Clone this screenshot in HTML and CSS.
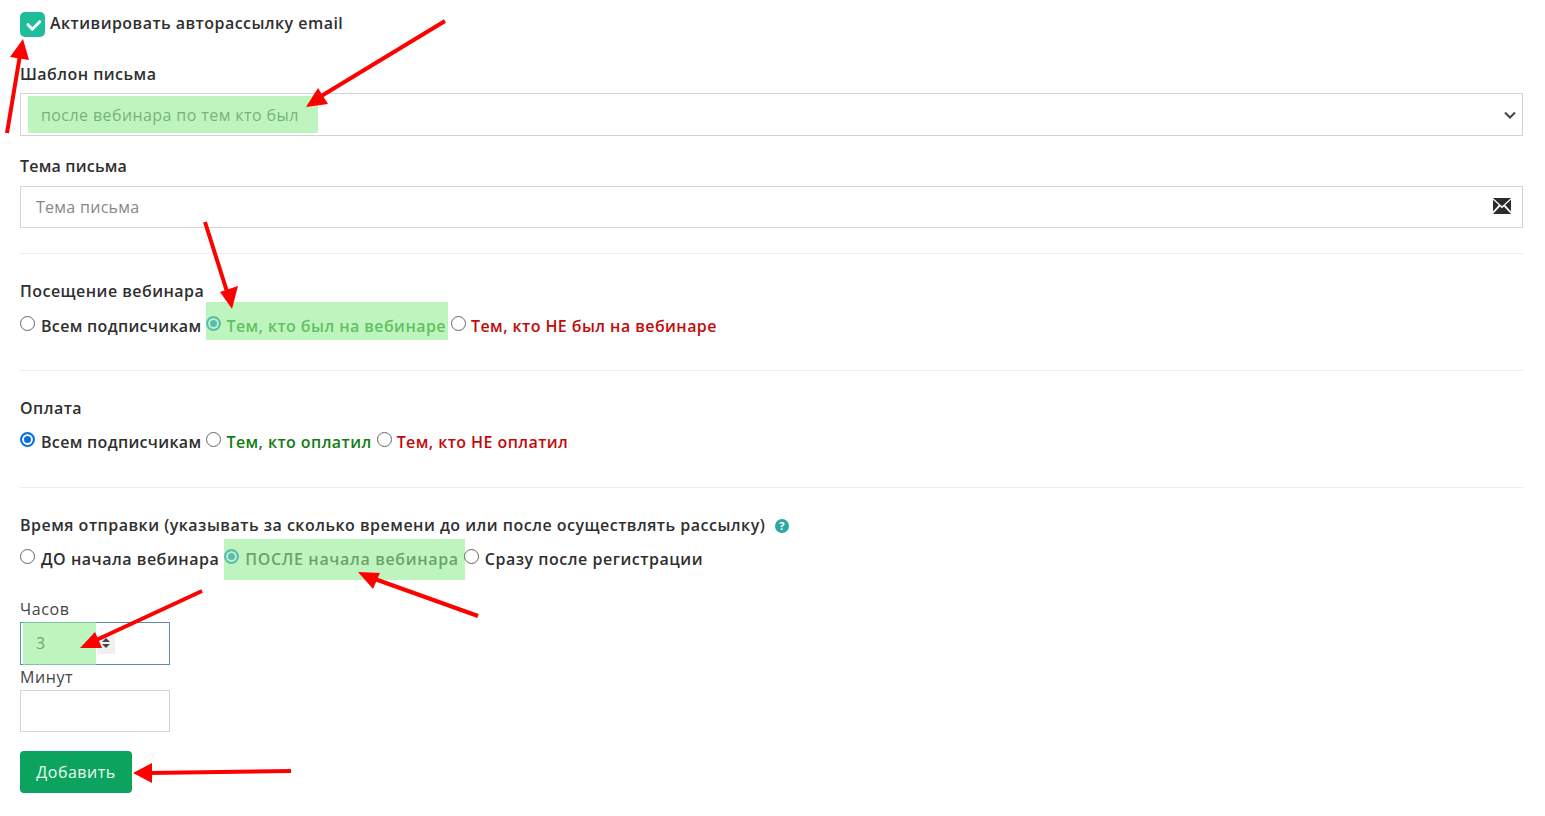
FILE: index.html
```html
<!DOCTYPE html>
<html lang="ru">
<head>
<meta charset="utf-8">
<title>Автор рассылка</title>
<link rel="stylesheet" href="styles.css">
</head>
<body>
<form class="form">
  <label class="activate">
    <span class="checkbox"><svg viewBox="0 0 25 25" width="25" height="25"><path d="M8 12.7l4.3 4.6 7.4-7.6" fill="none" stroke="#f4fffb" stroke-width="3" stroke-linecap="round" stroke-linejoin="round"/></svg></span>
    <span class="activate-text">Активировать авторассылку email</span>
  </label>

  <div class="field field-template">
    <div class="label">Шаблон письма</div>
    <div class="select mark mark-select">
      <span>после вебинара по тем кто был</span>
      <svg class="chevron" viewBox="0 0 12 8" width="12" height="8"><path d="M1 1.5l5 5 5-5" fill="none" stroke="#444" stroke-width="2"/></svg>
    </div>
  </div>

  <div class="field field-subject">
    <div class="label">Тема письма</div>
    <div class="input input-wide">
      <span class="placeholder">Тема письма</span>
      <svg class="envelope" viewBox="0 0 18 16" width="18" height="16"><path d="M0 0h18L9 8.2z" fill="#2b2b2b"/><path d="M0 1.8v11.6l5.8-6.3zM18 1.8v11.6l-5.8-6.3z" fill="#2b2b2b"/><path d="M0 16l7-7.6 2 1.8 2-1.8 7 7.6z" fill="#2b2b2b"/></svg>
    </div>
  </div>

  <hr class="rule">

  <section class="group">
    <div class="label">Посещение вебинара</div>
    <div class="radios radios-visit">
      <label class="radio tight"><i class="dot"></i>Всем подписчикам</label>
      <label class="radio mark mark-visit"><i class="dot on"></i><b class="green">Тем, кто был на вебинаре</b></label>
      <label class="radio"><i class="dot"></i><b class="red">Тем, кто НЕ был на вебинаре</b></label>
    </div>
  </section>

  <hr class="rule">

  <section class="group">
    <div class="label">Оплата</div>
    <div class="radios">
      <label class="radio tight"><i class="dot on"></i>Всем подписчикам</label>
      <label class="radio"><i class="dot"></i><b class="green">Тем, кто оплатил</b></label>
      <label class="radio"><i class="dot"></i><b class="red">Тем, кто НЕ оплатил</b></label>
    </div>
  </section>

  <hr class="rule rule-third">

  <section class="group">
    <div class="label label-time">Время отправки (указывать за сколько времени до или после осуществлять рассылку) <span class="help">?</span></div>
    <div class="radios radios-time">
      <label class="radio wide"><i class="dot"></i>ДО начала вебинара</label>
      <label class="radio mark mark-time"><i class="dot on"></i>ПОСЛЕ начала вебинара</label>
      <label class="radio wide"><i class="dot"></i>Сразу после регистрации</label>
    </div>
  </section>

  <div class="small-label small-hours">Часов</div>
  <div class="input input-small focused mark mark-number">
    <span class="value">3</span>
    <span class="spinner"><i class="up"></i><i class="down"></i></span>
  </div>
  <div class="small-label small-minutes">Минут</div>
  <div class="input input-small"></div>

  <button class="submit" type="button">Добавить</button>
</form>

<svg class="arrows" viewBox="0 0 1545 816" width="1545" height="816" aria-hidden="true">
  <g stroke="#f00" stroke-width="4" fill="none">
    <path d="M7 133L20 55"/>
    <path d="M445 21L318 98"/>
    <path d="M205 222L229 298"/>
    <path d="M478 616L372 578"/>
    <path d="M202 591L92 642"/>
    <path d="M291 771L148 773"/>
  </g>
  <g fill="#f00">
    <path d="M23 39L10 57L29 60z"/>
    <path d="M306 107L318 88L328 104z"/>
    <path d="M232 309L220 292L238 286z"/>
    <path d="M358 572L373 589L380 573z"/>
    <path d="M80 648L95 632L102 648z"/>
    <path d="M133 773L152 763V783z"/>
  </g>
</svg>
</body>
</html>
```
FILE: styles.css
```css
* { box-sizing: border-box; }

html, body { margin: 0; padding: 0; background: #fff; }

body {
  position: relative;
  width: 1545px;
  height: 816px;
  overflow: hidden;
  font-family: "Open Sans", "Noto Sans", sans-serif;
  font-size: 16px;
  line-height: 20px;
  color: #2f2f2f;
}

.form { padding: 12px 22px 0 20px; }

.activate {
  display: flex;
  align-items: flex-start;
  gap: 5px;
  height: 25px;
  font-weight: 600;
  letter-spacing: 0.46px;
}
.activate-text { padding-top: 1px; }

.checkbox {
  flex: none;
  width: 25px;
  height: 25px;
  border-radius: 5px;
  background: #1fbd9c;
}
.checkbox svg { display: block; }

.label { font-weight: 600; letter-spacing: 0.46px; }
.label-time { letter-spacing: 0.49px; }

.field-template { margin-top: 27px; }
.field-subject { margin-top: 20px; }
.field-template .label { margin-bottom: 9px; }
.field-subject .label { margin-bottom: 10px; letter-spacing: 0.2px; }

.select, .input {
  position: relative;
  display: flex;
  align-items: center;
  background: #fff;
  border: 1px solid #d3d3d3;
}

.select { height: 43px; padding-left: 20px; color: #555; letter-spacing: 0.41px; }
.input-wide { height: 42px; padding-left: 15px; }
.placeholder { color: #888; letter-spacing: 0.28px; }

.chevron { position: absolute; right: 6px; top: 17px; }
.envelope { position: absolute; right: 11px; top: 11px; }

.rule { height: 1px; margin: 25px 0 0; border: 0; background: #ececec; }
.rule-third { margin-top: 33px; }

.group { padding-top: 27px; }

.radios {
  display: flex;
  align-items: stretch;
  gap: 5px;
  margin-top: 12px;
  height: 24px;
}
.radios-visit { margin-top: 1px; margin-bottom: 30px; height: 38px; padding: 0; }
.radios-visit .radio { padding-top: 10px; }
.radios-time { margin-top: 4px; height: 41px; }
.radios-time .radio { padding-bottom: 2px; }

.radio {
  position: relative;
  display: flex;
  align-items: center;
  gap: 6px;
  font-weight: 600;
  letter-spacing: 0.47px;
  white-space: nowrap;
}
.tight { letter-spacing: 0.32px; }
.wide { letter-spacing: 0.52px; }
.mark-time { letter-spacing: 0.66px; }

.dot {
  flex: none;
  width: 15px;
  height: 15px;
  margin-top: -5px;
  border: 1px solid #666;
  border-radius: 50%;
  background: #fff;
}
.dot.on {
  border: 2px solid #0b6fe0;
  box-shadow: inset 0 0 0 2px #fff;
  background: #0b6fe0;
}

.green, .red { margin-left: -1px; font-weight: 600; letter-spacing: 0.43px; }
.green { color: #137c13; }
.red { color: #c20a0a; }

.help {
  display: inline-block;
  width: 14px;
  height: 14px;
  margin-left: 5px;
  border-radius: 50%;
  background: #2aa8a2;
  color: #fff;
  font-size: 11px;
  font-weight: 700;
  letter-spacing: 0;
  line-height: 14px;
  text-align: center;
  vertical-align: 1px;
}

.small-label { color: #444; letter-spacing: 0.6px; }
.small-hours { margin-top: 19px; margin-bottom: 3px; }
.small-minutes { margin-top: 2px; margin-bottom: 3px; }

.input-small { width: 150px; height: 42px; padding-left: 15px; }
.focused { height: 43px; border-color: #5b8ea6; }
.value { color: #333; padding-bottom: 2px; }

.spinner {
  position: absolute;
  left: 76px;
  top: 12px;
  display: flex;
  flex-direction: column;
  align-items: center;
  gap: 2px;
  width: 18px;
  height: 19px;
  padding-top: 3px;
  background: #f0f0f0;
}
.spinner i {
  width: 0;
  height: 0;
  border-left: 4px solid transparent;
  border-right: 4px solid transparent;
}
.spinner .up { border-bottom: 4px solid #444; }
.spinner .down { border-top: 4px solid #444; }

.submit {
  display: block;
  width: 112px;
  height: 42px;
  margin-top: 19px;
  padding: 0;
  border: 0;
  border-radius: 4px;
  background: #0ca35e;
  color: #e9fbf1;
  font: inherit;
  font-weight: 500;
  letter-spacing: 0.5px;
}

/* annotator's translucent green highlights, laid over the finished form */
.mark::after {
  content: "";
  position: absolute;
  background: rgba(147, 238, 147, 0.6);
  pointer-events: none;
}
.mark-select::after { left: 7px; top: 2px; width: 290px; height: 37px; }
.mark-visit::after { left: 0; top: 0; right: -2px; bottom: 0; }
.mark-time::after { left: 0; top: 0; right: -6px; bottom: 0; }
.mark-number::after { left: 2px; top: -1px; width: 73px; height: 43px; }

/* annotator's arrows, drawn over the screenshot */
.arrows { position: absolute; left: 0; top: 0; pointer-events: none; }
```
